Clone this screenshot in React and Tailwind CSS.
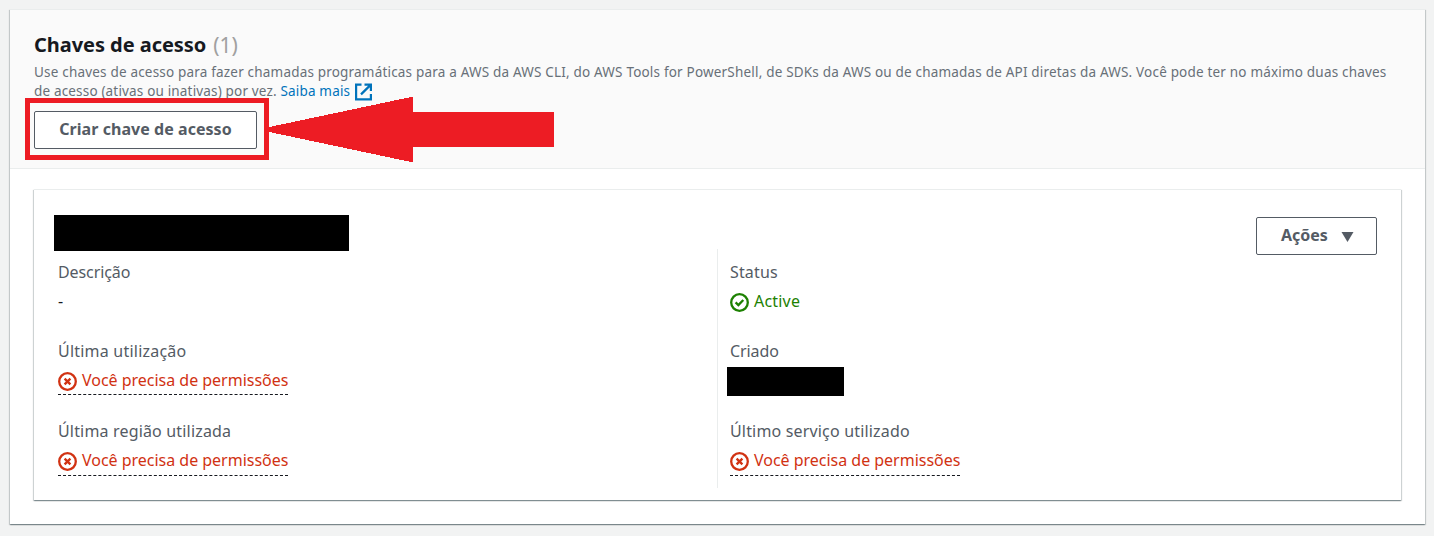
const panelShadow =
  'shadow-[0_1px_1px_0_rgba(0,28,36,0.3),1px_1px_1px_0_rgba(0,28,36,0.15),-1px_1px_1px_0_rgba(0,28,36,0.15)]';

function ExternalIcon() {
  return (
    <svg className="ml-[5px] h-[18px] w-[17px] shrink-0" viewBox="0 0 17 18" fill="none" stroke="#0073bb" strokeWidth="2.2">
      <path d="M6.5 1.6H1.1V16.4H15.9V11" />
      <path d="M9.5 1.6H15.9V8M15.6 1.9L6 11.4" />
    </svg>
  );
}

function StatusIcon({ ok }) {
  return (
    <svg className="mt-[3px] h-[19px] w-[19px] shrink-0" viewBox="0 0 19 19" fill="none" stroke="currentColor" strokeWidth="2.3">
      <circle cx="9.5" cy="9.5" r="8.3" />
      {ok ? <path d="M5.6 9.4L8.4 12.1L13.3 7" /> : <path d="M6.6 6.6L12.4 12.4M12.4 6.6L6.6 12.4" />}
    </svg>
  );
}

function Label({ children, className }) {
  return <div className={`h-6 whitespace-nowrap text-[16px] leading-6 text-[#545b64] ${className}`}>{children}</div>;
}

function PermissionError({ className }) {
  return (
    <div className={`flex w-[230px] items-start border-b border-dashed border-[#16191f] text-[#d13212] ${className}`}>
      <div className="flex h-6 items-center">
        <StatusIcon />
        <span className="ml-[5px] whitespace-nowrap text-[16px] leading-6 tracking-[-0.02px]">Você precisa de permissões</span>
      </div>
    </div>
  );
}

export default function App() {
  return (
    <main className="h-[536px] w-[1434px] overflow-hidden bg-[#f2f3f3] px-[10px] pt-[9px] font-['Noto_Sans',sans-serif] text-[#16191f]">
      <section className={`h-[515px] w-[1415px] border-t border-[#eaeded] bg-white ${panelShadow}`}>
        <header className="relative h-[159px] border-b border-[#eaeded] bg-[#fafafa] px-6 pt-[20px]">
          <h1 className="flex h-[30px] items-center gap-[7px] whitespace-nowrap text-[20px] leading-[30px]">
            <span className="font-bold tracking-[-0.05px]">Chaves de acesso</span>
            <span className="text-[21px] text-[#a0a0a0]">(1)</span>
          </h1>
          <div className="mt-[3px] whitespace-nowrap text-[13.5px] leading-[19px] text-[#687078]">
            <p className="tracking-[0.19px]">
              Use chaves de acesso para fazer chamadas programáticas para a AWS da AWS CLI, do AWS Tools for PowerShell, de SDKs da AWS ou de chamadas de API diretas da AWS. Você pode ter no máximo duas chaves
            </p>
            <div className="flex h-[19px] items-center tracking-[0.17px]">
              <span>de acesso (ativas ou inativas) por vez.&nbsp;</span>
              <a className="text-[#0073bb]">Saiba mais</a>
              <ExternalIcon />
            </div>
          </div>
          <button className="mt-[10px] flex h-[38px] w-[223px] items-center justify-center rounded-[2px] border border-[#545b64] bg-white pb-[2px] text-[16px] font-bold tracking-[0.05px] text-[#545b64]">
            <span className="whitespace-nowrap">Criar chave de acesso</span>
          </button>
          <div className="absolute left-[15px] top-[88px] h-[62px] w-[244px] border-[5px] border-[#ed1c24]" />
          <svg className="absolute left-[257px] top-[86px]" width="290" height="68" viewBox="0 0 290 68" fill="#ed1c24" shapeRendering="crispEdges">
            <path d="M0 31.5L144 1H146V16H286L287 17V50L286 51H146V66H144L0 35.5Z" />
          </svg>
        </header>
        <div className="px-6 pt-[20px]">
          <article className={`h-[311px] w-[1367px] border-t border-[#eaeded] bg-white pl-5 pr-6 pt-[24px] ${panelShadow}`}>
            <div className="flex h-[58px] items-start justify-between">
              <div className="mt-px h-[36px] w-[295px] bg-black" />
              <button className="mt-[3px] flex h-[38px] w-[121px] items-center rounded-[2px] border border-[#545b64] pb-[3px] pl-6 text-[16px] font-bold tracking-[-0.05px] text-[#545b64]">
                <span>Ações</span>
                <svg className="ml-[13px] mt-[4px]" width="13" height="10" viewBox="0 0 13 10" fill="#545b64">
                  <path d="M.5 0H12.5L6.5 10Z" />
                </svg>
              </button>
            </div>
            <div className="-mt-[23px] flex h-[239px]">
              <div className="w-[663px] pl-1 pt-[11px]">
                <Label className="tracking-[-0.1px]">Descrição</Label>
                <div className="mt-[5px] h-6 text-[16px] leading-6">-</div>
                <Label className="mt-[26px] tracking-[0.22px]">Última utilização</Label>
                <PermissionError className="mt-[5px] h-[27px]" />
                <Label className="mt-[24px] tracking-[0.17px]">Última região utilizada</Label>
                <PermissionError className="mt-[5px] h-[28px]" />
              </div>
              <div className="border-l border-[#eaeded] pl-[12px] pt-[11px]">
                <Label className="tracking-[0.15px]">Status</Label>
                <div className="mt-[5px] flex h-6 items-center text-[#1d8102]">
                  <StatusIcon ok />
                  <span className="ml-[5px] text-[16px] leading-6 tracking-[0.2px]">Active</span>
                </div>
                <Label className="mt-[26px] tracking-[-0.1px]">Criado</Label>
                <div className="-ml-[3px] mt-[4px] h-[29px] w-[117px] bg-black" />
                <Label className="mt-[23px] tracking-[0.17px]">Último serviço utilizado</Label>
                <PermissionError className="mt-[5px] h-[28px]" />
              </div>
            </div>
          </article>
        </div>
      </section>
    </main>
  );
}
